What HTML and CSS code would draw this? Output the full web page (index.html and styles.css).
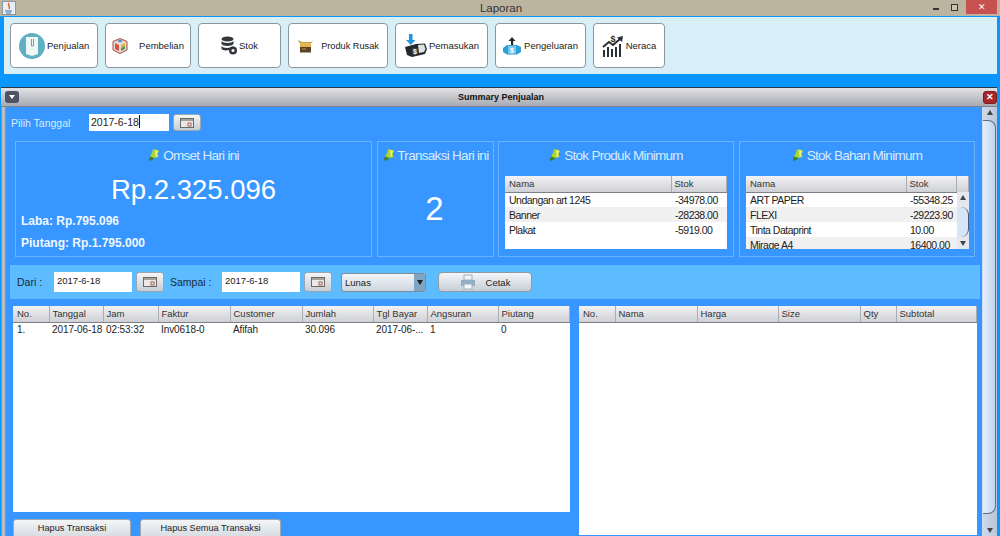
FILE: index.html
```html
<!DOCTYPE html>
<html lang="en">
<head>
    <meta charset="UTF-8">
    <title>Laporan</title>
    <link rel="stylesheet" href="styles.css">
</head>
<body>
    <svg class="defs" width="0" height="0">
        <symbol id="pin" viewBox="0 0 12 14">
            <path d="M5 1 L11 2.500 L9.500 6 L10.500 9 L6 10 L2 8.500 L4 5 Z" fill="#a8d62c"/>
            <path d="M7 1.800 L10.500 3 L9 6 L9.800 8.500 L7.500 9 Z" fill="#eef06a"/>
            <path d="M2 8.500 L6.500 10.200 L2.500 13 L0.800 12 Z" fill="#3f7f2a"/>
        </symbol>
        <symbol id="cal" viewBox="0 0 14 10">
            <rect x="0.5" y="0.5" width="13" height="9" fill="#eceae6" stroke="#6d6a66"/>
            <rect x="1" y="1" width="12" height="2" fill="#a89f97"/>
            <rect x="8" y="5" width="3" height="3" fill="none" stroke="#a0625a"/>
        </symbol>
    </svg>

    <div class="titlebar">
        <svg class="app-icon" width="14" height="14" viewBox="0 0 14 14">
            <rect x="0.5" y="0.5" width="13" height="13" fill="#e8eef5" stroke="#8d97a3"/>
            <path d="M7 2 C5 5 9 5 7 8" fill="none" stroke="#d8641e" stroke-width="1.4"/>
            <path d="M3 10 H10 M4 12 H9" stroke="#3b6ea5" stroke-width="1.2"/>
        </svg>
        <span class="title-text">Laporan</span>
        <div class="win-controls">
            <span class="win-min"></span>
            <span class="win-max"></span>
            <span class="win-close">&#10005;</span>
        </div>
    </div>

    <div class="toolbar">
        <button class="tool tool-penjualan">
            <svg width="26" height="26" viewBox="0 0 26 26">
                <circle cx="13" cy="13" r="13" fill="#5fb0c2"/>
                <path d="M7 4 H19 V21 L13 23 L7 21 Z" fill="#eef6f6"/>
                <path d="M12.500 6 V13 H14.500 V6" fill="none" stroke="#7d9da6"/>
            </svg>
            <span>Penjualan</span>
        </button>
        <button class="tool tool-pembelian">
            <svg width="16" height="16" viewBox="0 0 16 16">
                <path d="M8 0.500 L15 3.500 V12 L8 15.500 L1 12 V3.500 Z" fill="#e6ddd2" stroke="#a24a42"/>
                <path d="M3 5 L7 7 V13 L3 11 Z" fill="#d8503f"/>
                <path d="M9 7 L13 5 V8 L9 10 Z" fill="#e6b23a"/>
                <path d="M9 10 L13 8 V11 L9 13 Z" fill="#4f9a54"/>
                <path d="M5 3 L8 1.600 L11 3 L8 4.500 Z" fill="#5b8fc4"/>
            </svg>
            <span>Pembelian</span>
        </button>
        <button class="tool tool-stok">
            <svg width="16" height="19" viewBox="0 0 16 19">
                <ellipse cx="6.500" cy="3" rx="6" ry="2.600" fill="#33373b"/>
                <path d="M0.500 5 C2 7.500 11 7.500 12.500 5 V8 C11 10.500 2 10.500 0.500 8 Z" fill="#33373b"/>
                <path d="M0.500 10 C2 12.500 9 12.500 12.500 10 V12 C9 15 2 15 0.500 13 Z" fill="#33373b"/>
                <circle cx="12" cy="14.500" r="4" fill="#33373b"/>
                <circle cx="12" cy="14.500" r="1.500" fill="#fff"/>
            </svg>
            <span>Stok</span>
        </button>
        <button class="tool tool-rusak">
            <svg width="17" height="14" viewBox="0 0 17 14">
                <path d="M0.500 1 L5 3 H14 L16.500 1.500 L14 4.500 H3 Z" fill="#c69a45"/>
                <rect x="3" y="4.500" width="11" height="3.500" fill="#e2b64b"/>
                <rect x="3" y="8" width="11" height="5.500" fill="#5a4327"/>
                <rect x="5" y="9.500" width="4" height="1" fill="#c69a45"/>
            </svg>
            <span>Produk Rusak</span>
        </button>
        <button class="tool tool-masuk">
            <svg width="23" height="24" viewBox="0 0 23 24">
                <path d="M5 0 H8.500 V6 H11.500 L6.800 11 L2 6 H5 Z" fill="#1f97e0"/>
                <path d="M1 13 L12 10 L21 9.500 L23 15 L21 20 L8 23 L3 21 Z" fill="#26292c"/>
                <path d="M14 11 L20 10.500 L21.500 15 L20 18 L15 19 Z" fill="#dfe3e4"/>
                <path d="M8 14 H14 V20 H8 Z" fill="#3a3e42"/>
                <text x="11" y="19.500" class="icon-dollar" fill="#fff">$</text>
            </svg>
            <span>Pemasukan</span>
        </button>
        <button class="tool tool-keluar">
            <svg width="18" height="18" viewBox="0 0 18 18">
                <path d="M9 0 L12.500 4 H10.200 V8 H8 V4 H5.500 Z" fill="#25282b"/>
                <path d="M0 11 L4 8 H14 L18 10 V15 L14 17.500 H4 L0 15 Z" fill="#2e9fd8"/>
                <path d="M5 9 H13 V16.500 H5 Z" fill="#7cc8ec"/>
                <text x="9" y="15.500" class="icon-dollar" fill="#fff">$</text>
            </svg>
            <span>Pengeluaran</span>
        </button>
        <button class="tool tool-neraca">
            <svg width="22" height="23" viewBox="0 0 22 23">
                <text x="11" y="8" class="icon-dollar-big" fill="#2c2f33">$</text>
                <path d="M1 13 L7 8 L11 11 L18 5" fill="none" stroke="#2c2f33" stroke-width="2"/>
                <path d="M15 3.500 L21 2 L20 8 Z" fill="#2c2f33"/>
                <path d="M1 16 h2 v7 h-2 Z M5 13 h2 v10 h-2 Z M9 15 h2 v8 h-2 Z M13 13 h2 v10 h-2 Z M17 10 h2 v13 h-2 Z" fill="#2c2f33"/>
            </svg>
            <span>Neraca</span>
        </button>
    </div>

    <div class="desktop">
        <div class="frame">
            <div class="frame-title">
                <span class="frame-menu"></span>
                <span class="frame-name">Summary Penjualan</span>
                <span class="frame-close">&#10005;</span>
            </div>
            <div class="frame-main">
                <div class="frame-body">
                    <div class="date-row">
                        <label class="date-label">Pilih Tanggal</label>
                        <div class="date-field active">2017-6-18<i class="caret"></i></div>
                        <button class="cal-btn"><svg width="14" height="10"><use href="#cal"/></svg></button>
                    </div>

                    <div class="cards">
                        <section class="card card-omset">
                            <h3 class="card-title"><svg width="12" height="14"><use href="#pin"/></svg> Omset Hari ini</h3>
                            <div class="big-money">Rp.2.325.096</div>
                            <p class="sub-money sub-laba">Laba: Rp.795.096</p>
                            <p class="sub-money">Piutang: Rp.1.795.000</p>
                        </section>
                        <section class="card card-transaksi">
                            <h3 class="card-title"><svg width="12" height="14"><use href="#pin"/></svg> Transaksi Hari ini</h3>
                            <div class="big-count">2</div>
                        </section>
                        <section class="card card-stok">
                            <h3 class="card-title"><svg width="12" height="14"><use href="#pin"/></svg> Stok Produk Minimum</h3>
                            <div class="mini-wrap">
                                <table class="grid mini">
                                    <thead><tr><th class="m-nama">Nama</th><th>Stok</th></tr></thead>
                                    <tbody>
                                        <tr><td>Undangan art 1245</td><td>-34978.00</td></tr>
                                        <tr class="alt"><td>Banner</td><td>-28238.00</td></tr>
                                        <tr><td>Plakat</td><td>-5919.00</td></tr>
                                    </tbody>
                                </table>
                            </div>
                        </section>
                        <section class="card card-stok">
                            <h3 class="card-title"><svg width="12" height="14"><use href="#pin"/></svg> Stok Bahan Minimum</h3>
                            <div class="mini-wrap mini-wrap-bahan">
                                <table class="grid mini">
                                    <thead><tr><th class="b-nama">Nama</th><th class="b-stok">Stok</th><th></th></tr></thead>
                                    <tbody>
                                        <tr><td>ART PAPER</td><td colspan="2">-55348.25</td></tr>
                                        <tr class="alt"><td>FLEXI</td><td colspan="2">-29223.90</td></tr>
                                        <tr><td>Tinta Dataprint</td><td colspan="2">10.00</td></tr>
                                        <tr class="alt"><td>Mirage A4</td><td colspan="2">16400.00</td></tr>
                                    </tbody>
                                </table>
                                <div class="mini-scroll">
                                    <span class="arrow-up"></span>
                                    <span class="mini-thumb"></span>
                                    <span class="arrow-down"></span>
                                </div>
                            </div>
                        </section>
                    </div>

                    <div class="filter-bar">
                        <label class="filter-label">Dari :</label>
                        <div class="date-field small">2017-6-18</div>
                        <button class="cal-btn"><svg width="14" height="10"><use href="#cal"/></svg></button>
                        <label class="filter-label sampai">Sampai :</label>
                        <div class="date-field small">2017-6-18</div>
                        <button class="cal-btn"><svg width="14" height="10"><use href="#cal"/></svg></button>
                        <div class="combo"><span>Lunas</span><i class="combo-arrow"></i></div>
                        <button class="print-btn">
                            <svg width="16" height="16" viewBox="0 0 16 16">
                                <rect x="4" y="1" width="8" height="5" fill="#f2f5f7" stroke="#9fb0bc"/>
                                <rect x="1" y="6" width="14" height="6" fill="#8fb0c6"/>
                                <rect x="4" y="10" width="8" height="5" fill="#f5f7f8" stroke="#9fb0bc"/>
                            </svg>
                            <span>Cetak</span>
                        </button>
                    </div>

                    <div class="lower">
                        <div class="lower-left">
                            <div class="table-box box-left">
                                <table class="grid">
                                    <thead>
                                        <tr>
                                            <th class="c36">No.</th><th class="c54">Tanggal</th><th class="c55">Jam</th><th class="c72">Faktur</th><th class="c72">Customer</th><th class="c71">Jumlah</th><th class="c54">Tgl Bayar</th><th class="c71">Angsuran</th><th>Piutang</th>
                                        </tr>
                                    </thead>
                                    <tbody>
                                        <tr><td>1.</td><td>2017-06-18</td><td>02:53:32</td><td>Inv0618-0</td><td>Afifah</td><td>30.096</td><td>2017-06-...</td><td>1</td><td>0</td></tr>
                                    </tbody>
                                </table>
                            </div>
                            <div class="actions">
                                <button class="action a-one">Hapus Transaksi</button>
                                <button class="action a-two">Hapus Semua Transaksi</button>
                            </div>
                        </div>
                        <div class="table-box box-right">
                            <table class="grid">
                                <thead>
                                    <tr>
                                        <th class="c36">No.</th><th class="c82">Nama</th><th class="c81">Harga</th><th class="c82">Size</th><th class="c36">Qty</th><th>Subtotal</th>
                                    </tr>
                                </thead>
                                <tbody></tbody>
                            </table>
                        </div>
                    </div>
                </div>
                <div class="vscroll">
                    <span class="arrow-up"></span>
                    <span class="v-thumb"></span>
                    <span class="arrow-down"></span>
                </div>
            </div>
        </div>
    </div>
</body>
</html>
```

FILE: styles.css
```css
* { box-sizing: border-box; }

html, body {
    margin: 0;
    height: 536px;
    overflow: hidden;
}
body {
    width: 1000px;
    font-family: "Liberation Sans", Arial, sans-serif;
    font-size: 11px;
    color: #222;
    background: #0a96ff;
}
.defs { position: absolute; }
button { font-family: inherit; padding: 0; cursor: pointer; }

/* window title */
.titlebar {
    height: 16px;
    background: #bdb49f;
    display: grid;
    grid-template-columns: 1fr auto 1fr;
    align-items: center;
    padding-left: 2px;
}
.title-text { font-size: 11.5px; color: #333; }
.win-controls { display: flex; justify-content: flex-end; align-items: flex-start; height: 16px; padding-right: 3px; }
.win-min { width: 6px; height: 2px; background: #333; margin: 8px 12px 0 0; }
.win-max { width: 7px; height: 7px; border: 1px solid #333; margin: 4px 8px 0 0; background: #c9c2b0; }
.win-close {
    width: 31px;
    height: 14px;
    background: #c75050;
    color: #fff;
    font-size: 9px;
    line-height: 14px;
    text-align: center;
}

/* top toolbar */
.toolbar {
    height: 57px;
    margin: 1px 3px 0 4px;
    padding: 6px;
    background: #d9eff7;
    display: flex;
    gap: 7px;
}
.tool {
    height: 45px;
    background: #fff;
    border: 1px solid #8a96a0;
    border-radius: 4px;
    display: flex;
    align-items: center;
    justify-content: center;
    gap: 3px;
    font-size: 9.5px;
    color: #222;
}
.tool-penjualan { width: 88px; gap: 2px; padding-left: 8px; justify-content: flex-start; }
.tool-pembelian { width: 86px; gap: 11px; }
.tool-stok { width: 83px; gap: 2px; }
.tool-rusak { width: 100px; gap: 7px; font-size: 9.2px; }
.tool-masuk { width: 93px; gap: 2px; }
.tool-keluar { width: 91px; gap: 3px; }
.tool-neraca { width: 72px; gap: 2px; }
.icon-dollar { font-size: 7px; font-weight: bold; text-anchor: middle; }
.icon-dollar-big { font-size: 9px; font-weight: bold; text-anchor: middle; }

/* internal frame */
.desktop { padding: 13px 3px 0 1px; }
.frame {
    height: 449px;
    border-top: 1px solid #2a3a4a;
    background: #8f9297;
}
.frame-title {
    height: 18px;
    background: linear-gradient(#e2e2e6, #a7aab2);
    display: grid;
    grid-template-columns: 1fr auto 1fr;
    align-items: center;
    padding: 0 0 0 4px;
    position: relative;
}
.frame-menu {
    width: 14px;
    height: 12px;
    border-radius: 3px;
    background: #4c5365;
    position: relative;
}
.frame-menu::after {
    content: "";
    position: absolute;
    left: 4px;
    top: 4px;
    border: 3px solid transparent;
    border-top: 4px solid #fff;
    border-bottom: 0;
}
.frame-name { font-size: 9px; font-weight: bold; color: #111; }
.frame-close {
    justify-self: end;
    width: 14px;
    height: 13px;
    border-radius: 3px;
    background: #a5272a;
    border: 1px solid #7c1a1d;
    color: #fff;
    font-size: 9px;
    font-weight: bold;
    line-height: 11px;
    text-align: center;
}
.frame-main {
    display: flex;
    height: 430px;
    padding-left: 5px;
    border-top: 1px solid #7f8288;
    background: linear-gradient(90deg, #8b8b8d 0, #c9c9cc 50%, #8b8b8d 100%) left / 5px 100% no-repeat #c6d2e2;
}
.frame-body {
    width: 976px;
    background: #3796ff;
    padding: 7px 0 0 5px;
    overflow: hidden;
}

/* date row */
.date-row {
    display: flex;
    align-items: center;
    height: 17px;
}
.date-label {
    width: 78px;
    color: #d6ecff;
    font-size: 10.5px;
}
.date-field {
    width: 80px;
    height: 17px;
    background: #fff;
    font-size: 10.5px;
    line-height: 17px;
    padding-left: 2px;
    color: #222;
}
.caret {
    display: inline-block;
    width: 1px;
    height: 13px;
    background: #111;
    vertical-align: -2px;
}
.cal-btn {
    width: 28px;
    height: 17px;
    margin-left: 4px;
    background: linear-gradient(#f4f6f8, #c6cdd5);
    border: 1px solid #9aa6b2;
    border-radius: 3px;
    display: flex;
    align-items: center;
    justify-content: center;
}

/* summary cards */
.cards {
    display: flex;
    gap: 5px;
    margin: 10px 0 0 4px;
    height: 116px;
}
.card {
    border: 1px solid #69b2ff;
    color: #fff;
    position: relative;
}
.card-omset { width: 357px; }
.card-transaksi { width: 117px; margin-right: -1px; }
.card-stok { width: 236px; }
.card-title {
    margin: 6px 0 0;
    height: 16px;
    font-size: 13.5px;
    font-weight: normal;
    line-height: 16px;
    text-align: center;
    color: #d8ecff;
    white-space: nowrap;
    letter-spacing: -0.7px;
}
.card-title svg { vertical-align: -2px; }
.big-money {
    font-size: 27.5px;
    line-height: 32px;
    text-align: center;
    margin-top: 10px;
}
.sub-money {
    margin: 5px 0 0 5px;
    font-size: 12px;
    font-weight: bold;
    line-height: 17px;
    color: #f0f7ff;
}
.sub-laba { margin-top: 7px; }
.big-count {
    font-size: 33px;
    line-height: 40px;
    text-align: center;
    margin-top: 25px;
    margin-left: -2px;
}
.mini-wrap {
    margin: 12px 0 0 6px;
    width: 222px;
    height: 73px;
    background: #fff;
    overflow: hidden;
    position: relative;
}
.mini-wrap-bahan { width: 223px; }

/* tables */
.grid {
    width: 100%;
    border-collapse: collapse;
    table-layout: fixed;
    color: #222;
}
.grid th {
    height: 16px;
    padding: 0 3px;
    font-size: 9.5px;
    font-weight: normal;
    text-align: left;
    color: #333;
    background: linear-gradient(#f2f2f4, #cfd0d5);
    border-right: 1px solid #a9acb2;
    border-bottom: 1px solid #7e8086;
    overflow: hidden;
    white-space: nowrap;
}
.grid td {
    height: 15px;
    padding: 0 3px;
    font-size: 10px;
    white-space: nowrap;
    overflow: hidden;
    letter-spacing: -0.1px;
}
.grid th:first-child, .grid td:first-child { padding-left: 4px; }
.mini td { font-size: 10.5px; padding-left: 4px; letter-spacing: -0.5px; }
.alt td { background: #f0f0f0; }
.m-nama { width: 166px; }
.b-nama { width: 160px; }
.b-stok { width: 50px; }
.c36 { width: 36px; }
.c54 { width: 54px; }
.c55 { width: 55px; }
.c71 { width: 71px; }
.c72 { width: 72px; }
.c81 { width: 81px; }
.c82 { width: 82px; }

/* overlay scroll inside the second stock table */
.mini-scroll {
    position: absolute;
    right: 0;
    top: 16px;
    width: 12px;
    bottom: 0;
    background: #e4e8ee;
}
.mini-thumb {
    position: absolute;
    left: 0;
    right: 0;
    top: 15px;
    height: 30px;
    background: #d7e6f6;
    border-right: 1px solid #4a5a70;
    border-radius: 0 8px 8px 0;
}
.arrow-up, .arrow-down {
    position: absolute;
    left: 50%;
    margin-left: -3px;
    border: 3px solid transparent;
}
.arrow-up { top: 3px; border-bottom: 5px solid #444; border-top: 0; }
.arrow-down { bottom: 3px; border-top: 5px solid #444; border-bottom: 0; }

/* filter */
.filter-bar {
    margin: 8px 0 0 -1px;
    width: 970px;
    height: 34px;
    background: #5cbcff;
    display: flex;
    align-items: center;
    padding: 0 0 0 6px;
}
.filter-label { width: 38px; font-size: 10.5px; padding-left: 1px; color: #1a2a3a; }
.sampai { width: 52px; margin-left: 6px; padding-left: 0; }
.date-field.small { width: 78px; height: 20px; line-height: 17px; font-size: 9.5px; padding-left: 3px; }
.filter-bar .cal-btn { height: 20px; }
.combo {
    width: 85px;
    height: 19px;
    margin-left: 9px;
    background: linear-gradient(#f2f5f8, #cdd6df);
    border: 1px solid #7e8c99;
    border-radius: 3px;
    font-size: 9.5px;
    line-height: 17px;
    padding-left: 3px;
    position: relative;
}
.combo-arrow {
    position: absolute;
    right: 0;
    top: 0;
    bottom: 0;
    width: 11px;
    background: #7fa5c4;
}
.combo-arrow::after {
    content: "";
    position: absolute;
    left: 3px;
    top: 6px;
    border: 3px solid transparent;
    border-top: 5px solid #222;
    border-bottom: 0;
}
.print-btn {
    width: 94px;
    height: 20px;
    margin-left: 12px;
    background: linear-gradient(#f4f6f8, #c6cdd5);
    border: 1px solid #8e9aa6;
    border-radius: 4px;
    display: flex;
    align-items: center;
    justify-content: center;
    gap: 10px;
    font-size: 9.5px;
    color: #222;
}

/* lower tables */
.lower {
    display: flex;
    gap: 9px;
    margin: 7px 0 0 2px;
}
.table-box { background: #fff; overflow: hidden; }
.box-left { width: 557px; height: 206px; }
.box-right { width: 398px; height: 229px; }
.actions {
    display: flex;
    gap: 9px;
    margin-top: 7px;
}
.action {
    height: 24px;
    padding-bottom: 7px;
    background: linear-gradient(#f3f5f7, #cfd4da);
    border: 1px solid #a0a9b2;
    border-radius: 3px 3px 0 0;
    font-size: 9.2px;
    color: #222;
}
.a-one { width: 118px; }
.a-two { width: 141px; }

/* frame scrollbar */
.vscroll {
    width: 15px;
    position: relative;
    background: linear-gradient(90deg, #cfdaea, #b9c6d8);
}
.v-thumb {
    position: absolute;
    left: 1px;
    right: 1px;
    top: 13px;
    height: 394px;
    background: linear-gradient(90deg, #e5eefa, #bfd4ee);
    border: 1px solid #5f6f85;
    border-left: 0;
    border-radius: 0 8px 8px 0;
}
```
